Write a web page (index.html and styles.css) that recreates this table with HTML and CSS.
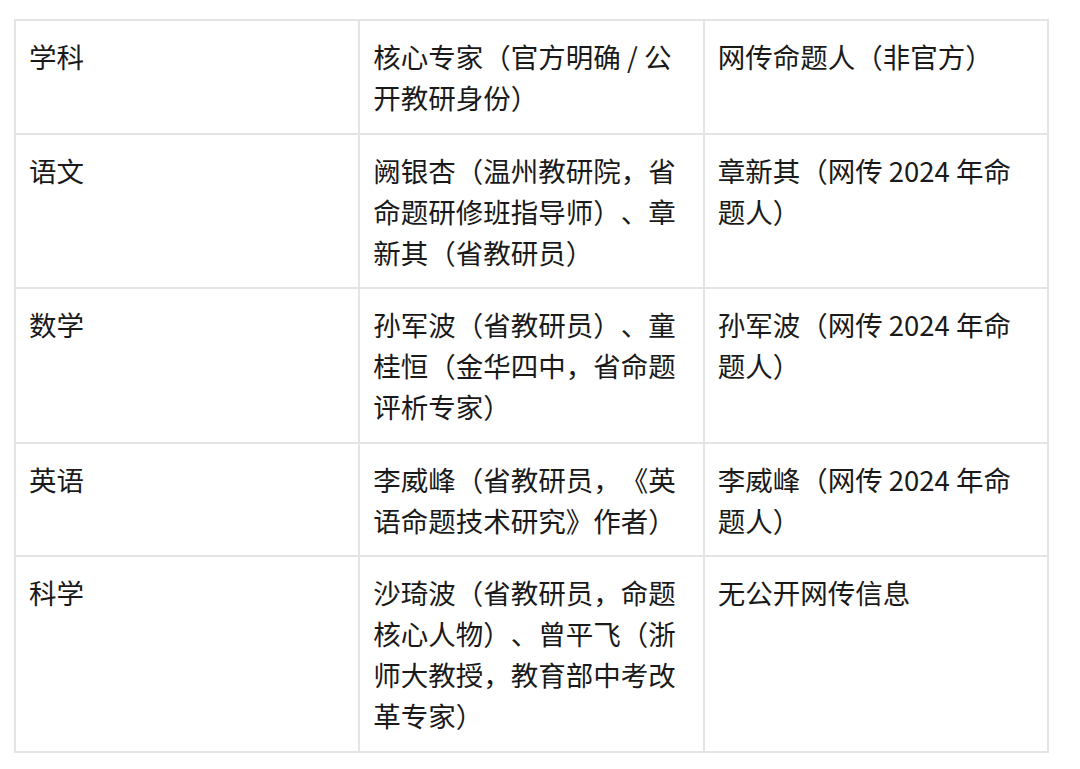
FILE: index.html
```html
<!DOCTYPE html>
<html lang="zh-CN">
<head>
<meta charset="utf-8">
<title>命题专家</title>
<link rel="stylesheet" href="styles.css">
</head>
<body>
<table class="grid">
  <tbody>
    <tr>
      <td>学科</td>
      <td>核心专家（官方明确 / 公开教研身份）</td>
      <td>网传命题人（非官方）</td>
    </tr>
    <tr>
      <td>语文</td>
      <td>阙银杏（温州教研院，省命题研修班指导师）、章新其（省教研员）</td>
      <td>章新其（网传 2024 年命题人）</td>
    </tr>
    <tr>
      <td>数学</td>
      <td>孙军波（省教研员）、童桂恒（金华四中，省命题评析专家）</td>
      <td>孙军波（网传 2024 年命题人）</td>
    </tr>
    <tr>
      <td>英语</td>
      <td>李威峰（省教研员，《英语命题技术研究》作者）</td>
      <td>李威峰（网传 2024 年命题人）</td>
    </tr>
    <tr>
      <td>科学</td>
      <td>沙琦波（省教研员，命题核心人物）、曾平飞（浙师大教授，教育部中考改革专家）</td>
      <td>无公开网传信息</td>
    </tr>
  </tbody>
</table>
</body>
</html>
```
FILE: styles.css
```css
html, body {
  margin: 0;
  padding: 0;
  background: #ffffff;
}
body {
  padding: 19px 0 0 14px;
  font-family: "Noto Sans CJK SC", "Noto Sans", sans-serif;
  color: #1a1a1a;
}
.grid {
  width: 1035px;
  table-layout: fixed;
  border-collapse: collapse;
}
.grid td {
  width: 33.33%;
  border: 2px solid #e4e4e4;
  padding: 15px 15px 14.5px 13px;
  font-size: 27.5px;
  line-height: 41px;
  vertical-align: top;
  text-align: left;
  text-spacing-trim: space-all;
  font-feature-settings: "halt" 0, "chws" 0;
}
```
